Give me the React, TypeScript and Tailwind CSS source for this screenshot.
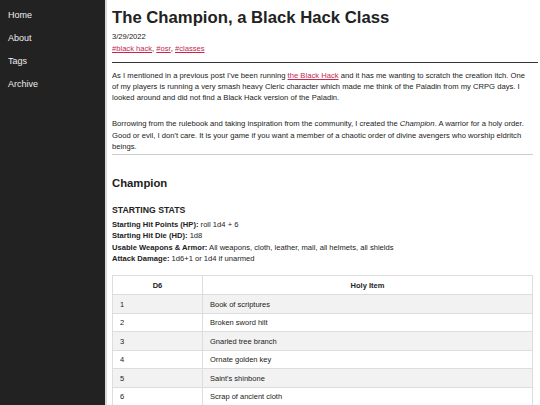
const nav = ["Home", "About", "Tags", "Archive"];

const items = [
  "Book of scriptures",
  "Broken sword hilt",
  "Gnarled tree branch",
  "Ornate golden key",
  "Saint's shinbone",
  "Scrap of ancient cloth",
];

function Sidebar() {
  return (
    <aside className="w-[107px] shrink-0 border-r-2 border-[#d9d9d9] bg-[#222222] pt-[4px]">
      <ul>
        {nav.map((item) => (
          <li key={item} className="h-[22.9px] pl-[8px] text-[9px] leading-[22.9px] text-[#eeeeee]">
            {item}
          </li>
        ))}
      </ul>
    </aside>
  );
}

function Stat({ label, value }: { label: string; value: string }) {
  return (
    <p>
      <b>{label}:</b> {value}
    </p>
  );
}

export default function App() {
  return (
    <div className="flex min-h-screen bg-white font-['Liberation_Sans',Arial,sans-serif] text-[#222222]">
      <Sidebar />

      <main className="min-w-0 flex-1 pl-[5px] pr-[7px]">
        <h1 className="mt-[8px] text-[16.7px] font-bold leading-[20px]">
          The Champion, a Black Hack Class
        </h1>

        <div className="mt-[3px] text-[7.6px] leading-[12px]">
          <p>3/29/2022</p>
          <p>
            <a className="text-[#c7254e] underline">#black hack</a>,{" "}
            <a className="text-[#c7254e] underline">#osr</a>,{" "}
            <a className="text-[#c7254e] underline">#classes</a>
          </p>
        </div>

        <hr className="mt-[7px] -mr-[5px] border-t border-[#333333]" />

        {/* Intro */}
        <div className="text-[7.65px] leading-[11.3px]">
          <p className="mt-[6.5px]">
            As I mentioned in a previous post I've been running{" "}
            <a className="text-[#c7254e] underline">the Black Hack</a> and it
            has me wanting to scratch the creation itch. One of my players is
            running a very smash heavy Cleric character which made me think of
            the Paladin from my CRPG days. I looked around and did not find a
            Black Hack version of the Paladin.
          </p>
          <p className="mt-[15px]">
            Borrowing from the rulebook and taking inspiration from the
            community, I created the <i>Champion</i>. A warrior for a holy
            order. Good or evil, I don't care. It is your game if you want a
            member of a chaotic order of divine avengers who worship eldritch
            beings.
          </p>
        </div>

        <hr className="mt-[1.5px] border-t border-[#cccccc]" />

        <h2 className="mt-[21px] text-[11.3px] font-bold leading-[14px]">Champion</h2>

        <h3 className="mt-[15px] text-[8.7px] font-bold leading-[11px]">STARTING STATS</h3>

        <div className="mt-[3px] text-[7.6px] leading-[11.4px]">
          <Stat label="Starting Hit Points (HP)" value="roll 1d4 + 6" />
          <Stat label="Starting Hit Die (HD)" value="1d8" />
          <Stat label="Usable Weapons & Armor" value="All weapons, cloth, leather, mail, all helmets, all shields" />
          <Stat label="Attack Damage" value="1d6+1 or 1d4 if unarmed" />
        </div>

        <table className="mt-[11px] w-full border-collapse border border-[#dddddd] text-[7.5px] leading-[11px]">
          <thead>
            <tr>
              <th className="h-[19px] w-[90px] border border-[#dddddd] px-[7px] text-center font-bold">D6</th>
              <th className="h-[19px] border border-[#dddddd] px-[7px] text-center font-bold">Holy Item</th>
            </tr>
          </thead>
          <tbody>
            {items.map((item, i) => (
              <tr key={item} className={i % 2 === 0 ? "bg-[#f2f2f2]" : "bg-white"}>
                <td className="h-[18.5px] border border-[#dddddd] px-[7px]">{i + 1}</td>
                <td className="h-[18.5px] border border-[#dddddd] px-[7px]">{item}</td>
              </tr>
            ))}
          </tbody>
        </table>
      </main>
    </div>
  );
}
